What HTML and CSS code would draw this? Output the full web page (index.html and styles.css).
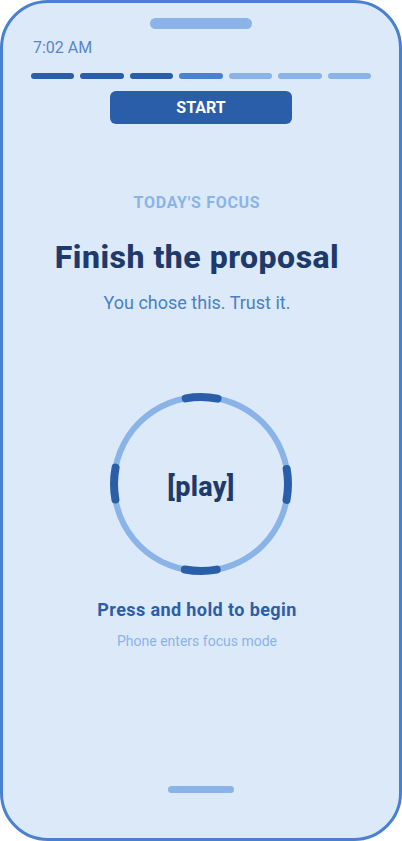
FILE: index.html
```html
<!DOCTYPE html>
<html lang="en">
<head>
  <meta charset="UTF-8">
  <title>Today's Focus</title>
  <meta name="viewport" content="width=device-width, initial-scale=1.0">
  <link rel="stylesheet" href="styles.css">
</head>
<body>

  <div class="phone">
    <div class="notch"></div>

    <div class="time">7:02 AM</div>

    <div class="progress">
      <span class="seg done"></span>
      <span class="seg done"></span>
      <span class="seg done"></span>
      <span class="seg current"></span>
      <span class="seg"></span>
      <span class="seg"></span>
      <span class="seg"></span>
    </div>

    <button class="start">START</button>

    <div class="copy">
      <div class="eyebrow">TODAY'S FOCUS</div>
      <h1 class="title">Finish the proposal</h1>
      <p class="subtitle">You chose this. Trust it.</p>
    </div>

    <div class="ring">
      <svg width="182" height="182" viewBox="0 0 182 182">
        <circle cx="91" cy="91" r="87" fill="none" stroke="#8ab4e8" stroke-width="6"/>
        <circle cx="91" cy="91" r="87" fill="none" stroke="#2b5ea8" stroke-width="8"
                stroke-linecap="round" stroke-dasharray="32 104.66" stroke-dashoffset="16"/>
      </svg>
      <div class="play">[play]</div>
    </div>

    <div class="copy">
      <div class="hint">Press and hold to begin</div>
      <div class="note">Phone enters focus mode</div>
    </div>

    <div class="home"></div>
  </div>

</body>
</html>
```

FILE: styles.css
```css
* { box-sizing: border-box; }

body, html {
  margin: 0;
  padding: 0;
  background: #ffffff;
  font-family: Roboto, 'Liberation Sans', sans-serif;
}

.phone {
  width: 402px;
  height: 841px;
  border: 3px solid #4a80d0;
  border-radius: 48px;
  background-color: #dce9f8;
  display: flex;
  flex-direction: column;
  align-items: center;
  overflow: hidden;
}

.notch {
  width: 102px;
  height: 11px;
  margin-top: 15px;
  border-radius: 6px;
  background-color: #8ab4e8;
}

.time {
  align-self: stretch;
  padding-left: 30px;
  margin-top: 9px;
  font-size: 16px;
  line-height: 20px;
  color: #5a86c4;
}

.progress {
  align-self: stretch;
  display: flex;
  gap: 6px;
  margin: 15px 28px 0;
}

.seg {
  flex: 1;
  height: 6px;
  border-radius: 3px;
  background-color: #8ab4e8;
}

.seg.done { background-color: #2b5ea8; }
.seg.current { background-color: #4a80d0; }

.start {
  width: 182px;
  height: 33px;
  margin-top: 12px;
  border: none;
  border-radius: 6px;
  background-color: #2b5ea8;
  color: white;
  font-family: Roboto, sans-serif;
  font-weight: 700;
  font-size: 16px;
  cursor: pointer;
}

.copy {
  align-self: stretch;
  display: flex;
  flex-direction: column;
  align-items: center;
  padding: 0 32px 0 24px;
}

.eyebrow {
  margin-top: 69px;
  font-size: 16px;
  line-height: 20px;
  font-weight: 700;
  letter-spacing: 0.7px;
  color: #8ab4e8;
}

.title {
  margin: 25px 0 0;
  font-size: 32px;
  line-height: 38px;
  font-weight: 800;
  letter-spacing: 0.5px;
  color: #1e3a6b;
}

.subtitle {
  margin: 16px 0 0;
  font-size: 18px;
  line-height: 22px;
  color: #4a80c4;
}

.ring {
  position: relative;
  width: 182px;
  height: 182px;
  margin-top: 79px;
}

.ring svg { display: block; }

.play {
  position: absolute;
  top: 0; left: 0;
  width: 100%;
  height: 100%;
  padding-top: 6px;
  display: flex;
  align-items: center;
  justify-content: center;
  font-size: 27px;
  font-weight: 800;
  letter-spacing: 0.3px;
  color: #1e3a6b;
}

.hint {
  margin-top: 24px;
  font-size: 18px;
  line-height: 22px;
  font-weight: 700;
  letter-spacing: 0.4px;
  color: #2b5ea8;
}

.note {
  margin-top: 11px;
  font-size: 14px;
  line-height: 18px;
  color: #8ab4e8;
}

.home {
  width: 66px;
  height: 7px;
  margin-top: auto;
  margin-bottom: 45px;
  border-radius: 4px;
  background-color: #8ab4e8;
}
```
